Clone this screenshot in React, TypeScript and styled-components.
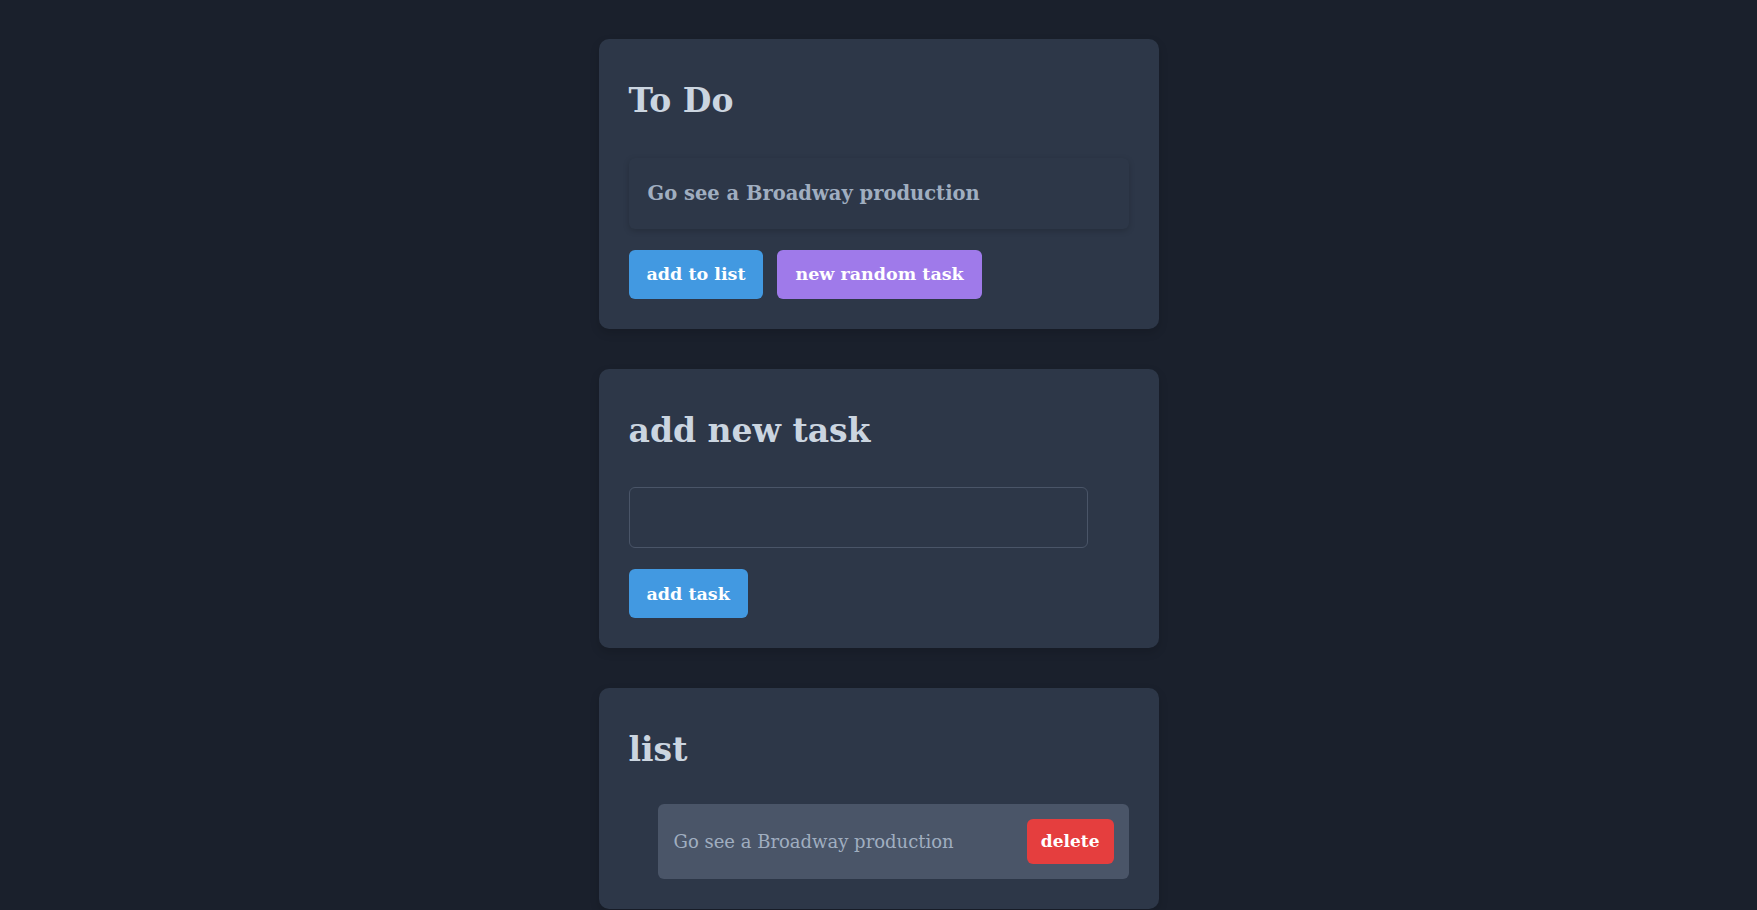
import styled, { createGlobalStyle } from "styled-components";

const GlobalStyle = createGlobalStyle`
  body {
    margin: 0;
    background: #1a202c;
    font-family: "DejaVu Serif", "Liberation Serif", serif;
  }
`;

type ButtonPropsType = {
  $variant?: "blue" | "purple" | "red";
};

const buttonColors = {
  blue: "#4299e1",
  purple: "#9f7aea",
  red: "#e53e3e",
};

function App() {
  return (
    <>
      <GlobalStyle />
      <Page>
        <Card>
          <Title>To Do</Title>
          <TaskDisplay>Go see a Broadway production</TaskDisplay>
          <ButtonRow>
            <Button $variant="blue">add to list</Button>
            <Button $variant="purple">new random task</Button>
          </ButtonRow>
        </Card>
        <Card>
          <Title>add new task</Title>
          <TaskInput type="text" />
          <ButtonRow>
            <Button $variant="blue">add task</Button>
          </ButtonRow>
        </Card>
        <Card>
          <Title>list</Title>
          <List>
            <ListItem>
              <span className="text">Go see a Broadway production</span>
              <DeleteButton $variant="red">delete</DeleteButton>
            </ListItem>
          </List>
        </Card>
      </Page>
    </>
  );
}

export default App;

const Page = styled.div`
  display: flex;
  flex-direction: column;
  align-items: center;
  gap: 40px;
  padding: 39px 0;
`;

const Card = styled.section`
  box-sizing: border-box;
  width: 560px;
  padding: 30px;
  background: #2d3748;
  border-radius: 10px;
  box-shadow: 0 4px 10px rgba(0, 0, 0, 0.15);
`;

const Title = styled.h1`
  margin: 12px 0 37px;
  font-size: 33px;
  line-height: 1.2;
  font-weight: bold;
  color: #cbd5e0;
`;

const TaskDisplay = styled.div`
  box-sizing: border-box;
  height: 71px;
  margin-top: 3px;
  display: flex;
  align-items: center;
  padding: 0 19px;
  border-radius: 6px;
  background: #2d3748;
  box-shadow: 0 2px 6px rgba(0, 0, 0, 0.18);
  color: #a0aec0;
  font-size: 19.5px;
  font-weight: 600;
`;

const ButtonRow = styled.div`
  display: flex;
  gap: 14px;
  margin-top: 21px;
`;

const Button = styled.button<ButtonPropsType>`
  height: 49px;
  padding: 0 18px;
  border: none;
  border-radius: 6px;
  background: ${(props) => buttonColors[props.$variant || "blue"]};
  color: #ffffff;
  font-family: inherit;
  font-size: 17.5px;
  font-weight: bold;
  cursor: pointer;
`;

const TaskInput = styled.input`
  display: block;
  box-sizing: border-box;
  width: 459px;
  height: 61px;
  padding: 0 16px;
  border: 1px solid #4a5568;
  border-radius: 6px;
  background: #2d3748;
  color: #cbd5e0;
  font-family: inherit;
  font-size: 18px;
  outline: none;
`;

const List = styled.ul`
  list-style: none;
  margin: -3px 0 0;
  padding: 0 0 0 29px;
`;

const ListItem = styled.li`
  box-sizing: border-box;
  display: flex;
  align-items: center;
  justify-content: space-between;
  height: 75px;
  padding: 0 15px 0 16px;
  border-radius: 6px;
  background: #4a5568;

  .text {
    color: #a0aec0;
    font-size: 18px;
  }
`;

const DeleteButton = styled(Button)`
  height: 45px;
  padding: 0 14px;
  font-size: 17px;
`;
